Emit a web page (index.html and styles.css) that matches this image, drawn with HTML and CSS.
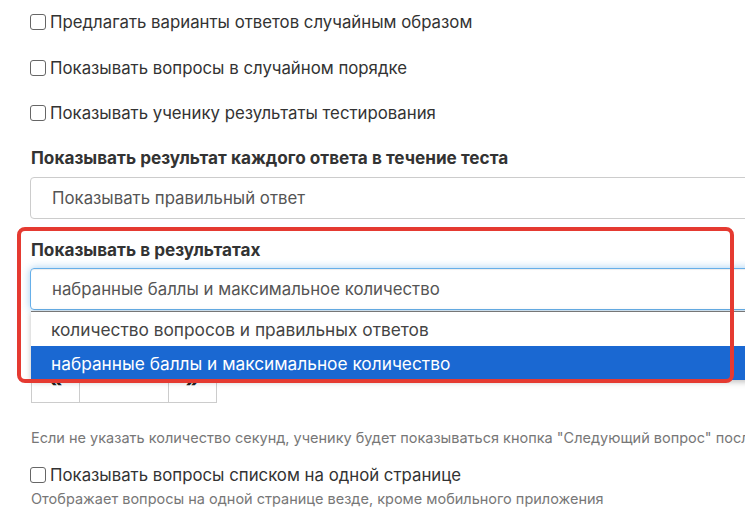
FILE: index.html
```html
<!DOCTYPE html>
<html lang="ru">
<head>
<meta charset="utf-8">
<title>Настройки теста</title>
<link rel="stylesheet" href="styles.css">
</head>
<body>
<div class="page">
  <label class="check-row first"><input type="checkbox" class="cb"><span>Предлагать варианты ответов случайным образом</span></label>
  <label class="check-row second"><input type="checkbox" class="cb"><span>Показывать вопросы в случайном порядке</span></label>
  <label class="check-row third"><input type="checkbox" class="cb"><span>Показывать ученику результаты тестирования</span></label>

  <div class="field-label first-label">Показывать результат каждого ответа в течение теста</div>
  <div class="select">Показывать правильный ответ</div>

  <div class="field-label second-label">Показывать в результатах</div>
  <div class="select-wrap">
    <div class="select focused">набранные баллы и максимальное количество</div>
    <ul class="dropdown">
      <li class="option">количество вопросов и правильных ответов</li>
      <li class="option selected">набранные баллы и максимальное количество</li>
    </ul>
  </div>

  <div class="stepper">
    <div class="step-btn">«</div>
    <div class="step-value"></div>
    <div class="step-btn">»</div>
  </div>

  <p class="help first-help">Если не указать количество секунд, ученику будет показываться кнопка "Следующий вопрос" после каждого ответа</p>

  <label class="check-row list-row"><input type="checkbox" class="cb"><span>Показывать вопросы списком на одной странице</span></label>
  <p class="help second-help">Отображает вопросы на одной странице везде, кроме мобильного приложения</p>

  <div class="highlight"></div>
</div>
</body>
</html>
```

FILE: styles.css
```css
html, body {
  margin: 0;
  padding: 0;
  background: #fff;
}
body {
  width: 745px;
  height: 523px;
  overflow: hidden;
  font-family: Inter, "Noto Sans", sans-serif;
  color: #333;
}
.page {
  position: relative;
  padding-left: 30px;
  padding-top: 10px;
  height: 513px;
}
.check-row {
  display: flex;
  align-items: center;
  height: 22px;
  font-size: 16.8px;
  line-height: 22px;
  color: #333;
  white-space: nowrap;
}
.check-row.first { margin-top: 1px; }
.check-row.second { margin-top: 24px; }
.check-row.third { margin-top: 23px; }
.cb {
  appearance: none;
  -webkit-appearance: none;
  width: 16px;
  height: 16px;
  margin: 0 4px 0 0;
  border: 1.5px solid #666;
  border-radius: 3px;
  background: #fff;
  box-sizing: border-box;
  flex: none;
}
.field-label {
  font-weight: 700;
  font-size: 17.2px;
  line-height: 22px;
  height: 22px;
  white-space: nowrap;
  padding-left: 1px;
}
.first-label { margin-top: 23px; }
.second-label { margin-top: 20px; }
.select {
  box-sizing: border-box;
  width: 760px;
  height: 42px;
  margin-top: 8px;
  border: 1px solid #ccc;
  border-radius: 4px;
  padding-left: 21px;
  font-size: 16.8px;
  line-height: 41px;
  color: #555;
  white-space: nowrap;
}
.select-wrap {
  position: relative;
  margin-top: 7px;
}
.select.focused {
  margin-top: 0;
  border-color: #66afe9;
  box-shadow: inset 0 1px 1px rgba(0,0,0,.075), 0 0 8px rgba(102,175,233,.6);
}
.dropdown {
  position: absolute;
  top: 43px;
  left: 1px;
  width: 760px;
  margin: 0;
  padding: 0;
  list-style: none;
  background: #fff;
  border-top: 1px solid #777;
  box-shadow: 0 2px 6px rgba(0,0,0,.25);
  z-index: 2;
}
.option {
  height: 32px;
  padding-top: 2px;
  line-height: 32px;
  padding-left: 20px;
  font-size: 17.3px;
  color: #444;
  white-space: nowrap;
}
.option.selected {
  background: #1a68d2;
  color: #fff;
}
.stepper {
  display: flex;
  margin-top: 51px;
  margin-left: 1px;
  height: 42px;
  width: 186px;
}
.step-btn, .step-value {
  box-sizing: border-box;
  border: 1px solid #ccc;
  height: 42px;
  line-height: 34px;
  text-align: center;
}
.step-btn {
  width: 49px;
  font-weight: 700;
  font-size: 22px;
  color: #222;
}
.step-value {
  width: 89px;
  border-left: none;
  border-right: none;
}
.help {
  margin: 0;
  font-size: 14.5px;
  line-height: 18px;
  color: #777;
  white-space: nowrap;
  padding-left: 1px;
}
.first-help { margin-top: 26px; }
.list-row { margin-top: 17px; }
.second-help { margin-top: 4px; }
.highlight {
  position: absolute;
  left: 17px;
  top: 227px;
  width: 717px;
  height: 156px;
  box-sizing: border-box;
  border: 4px solid #e53a31;
  border-radius: 8px;
  z-index: 3;
  pointer-events: none;
}
```
